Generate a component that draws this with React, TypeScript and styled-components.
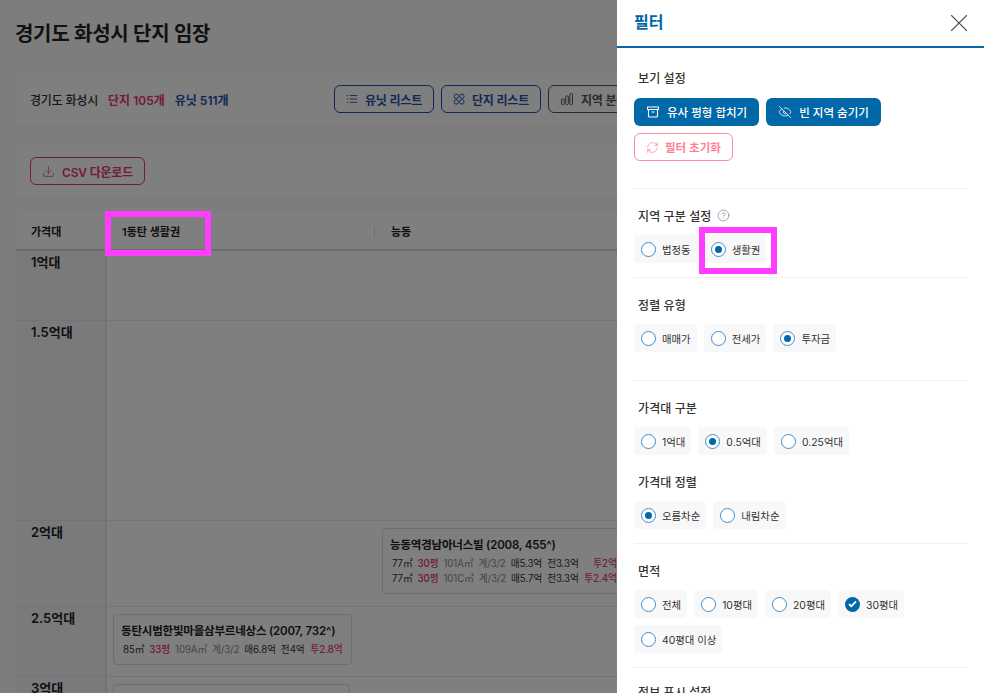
import React from 'react';
import styled, { createGlobalStyle } from 'styled-components';
import { CircleHelp, Download, EyeOff, RefreshCw, X } from 'lucide-react';

const FONT = `Inter, "Noto Sans CJK KR", "Noto Sans", sans-serif`;
const PRIMARY = '#0067a8';
const PINK = '#e8327f';

const GlobalStyle = createGlobalStyle`
  html, body {
    margin: 0;
    height: 100%;
    overflow: hidden;
    background: #fbfbfb;
    font-family: ${FONT};
  }
  * { box-sizing: border-box; }
`;

const ListIcon = () => (
  <svg width="14" height="14" viewBox="0 0 14 14" fill="none" stroke="currentColor" strokeWidth="1.100">
    <path d="M4.500 3h8.500M4.500 7h8.500M4.500 11h8.500M1 3h1.500M1 7h1.500M1 11h1.500" />
  </svg>
);

const CirclesIcon = () => (
  <svg width="14" height="14" viewBox="0 0 14 14" fill="none" stroke="currentColor" strokeWidth="1.100">
    <circle cx="3.800" cy="3.800" r="2.600" />
    <circle cx="10.400" cy="3.800" r="2.600" />
    <circle cx="3.800" cy="10.400" r="2.600" />
    <circle cx="10.400" cy="10.400" r="2.600" />
  </svg>
);

const BarsIcon = () => (
  <svg width="14" height="14" viewBox="0 0 14 14" fill="none" stroke="currentColor" strokeWidth="1">
    <rect x="1.500" y="7" width="2.600" height="5.500" rx="0.800" />
    <rect x="5.700" y="4" width="2.600" height="8.500" rx="0.800" />
    <rect x="9.900" y="1.500" width="2.600" height="11" rx="0.800" />
  </svg>
);

const BoxIcon = () => (
  <svg width="14" height="14" viewBox="0 0 14 14" fill="none" stroke="currentColor" strokeWidth="1.100">
    <path d="M1.500 2h11v2.500h-11zM2.500 4.500v6.500a1 1 0 0 0 1 1h7a1 1 0 0 0 1-1V4.500M5.500 7h3" />
  </svg>
);

const Page = styled.div`
  height: 693px;
  width: 984px;
  padding: 0 15px;
  overflow: hidden;
`;

const Title = styled.h1`
  margin: 0;
  height: 71px;
  display: flex;
  align-items: center;
  padding-bottom: 6px;
  font-size: 20px;
  font-weight: 600;
  letter-spacing: -0.3px;
  color: #222;
`;

const Card = styled.div`
  height: 56px;
  margin-bottom: 16px;
  padding: 0 14px;
  display: flex;
  align-items: center;
  background: #fff;
  border: 1px solid #f4f4f4;
  border-radius: 8px;
`;

const Summary = styled.div`
  display: flex;
  gap: 10px;
  width: 304px;
  font-size: 12px;
  font-weight: 500;
  letter-spacing: -0.2px;
  color: #333;
`;

const Count = styled.span<{ $color: string }>`
  color: ${p => p.$color};
  font-weight: 600;
  letter-spacing: 0;
`;

const Actions = styled.div`
  display: flex;
  gap: 7px;
  flex: none;
`;

const OutlineButton = styled.button<{ $color: string; $width: number }>`
  width: ${p => p.$width}px;
  height: 28px;
  flex: none;
  display: flex;
  align-items: center;
  gap: 7px;
  padding: 0 11px;
  background: #fff;
  border: 1px solid ${p => p.$color};
  border-radius: 6px;
  color: ${p => p.$color};
  font-family: ${FONT};
  font-size: 12px;
  font-weight: 600;
  letter-spacing: -0.2px;
  white-space: nowrap;
`;

const Table = styled.div`
  background: #fff;
  border: 1px solid #f4f4f4;
  border-radius: 8px 8px 0 0;
  margin-top: -4px;
`;

const HeaderRow = styled.div`
  display: grid;
  grid-template-columns: 91px 267px 1fr;
  height: 39px;
  padding-top: 3px;
  align-items: center;
  border-bottom: 2px solid #d4d6d8;
  font-size: 11px;
  font-weight: 600;
  color: #222;
`;

const HeaderCell = styled.div<{ $divider?: boolean }>`
  padding-left: ${p => (p.$divider ? 16 : 15)}px;
  border-left: ${p => (p.$divider ? '1px solid #dddddd' : 'none')};
  height: ${p => (p.$divider ? 12 : 16)}px;
  line-height: ${p => (p.$divider ? 12 : 16)}px;
`;

const PriceRow = styled.div<{ $height: number }>`
  display: grid;
  grid-template-columns: 91px 269px 1fr;
  height: ${p => p.$height}px;
  border-bottom: 1px solid #e8e8e8;
`;

const PriceLabel = styled.div`
  padding: 1px 0 0 15px;
  background: #f0f4f8;
  border-right: 2px solid #e4e6e8;
  font-size: 13px;
  font-weight: 600;
  color: #222;
`;

const Column = styled.div`
  padding: 7px 6px;
  min-width: 0;
`;

const ComplexCard = styled.div<{ $width: number }>`
  width: ${p => p.$width}px;
  padding: 7px 7px 0;
  height: 51px;
  background: #fff;
  border: 1px solid #dcdcdc;
  border-radius: 4px;
`;

const TallCard = styled(ComplexCard)`
  height: 66px;
`;

const ComplexName = styled.div`
  font-size: 11.500px;
  font-weight: 600;
  letter-spacing: -0.2px;
  color: #222;
  white-space: nowrap;
  margin-bottom: 3px;
`;

const UnitLine = styled.div`
  display: flex;
  gap: 5px;
  padding-left: 2px;
  height: 15px;
  align-items: center;
  font-size: 9.700px;
  letter-spacing: -0.1px;
  white-space: nowrap;
  color: #333;
`;

const UnitPart = styled.span<{ $tone?: 'pink' | 'muted' | 'pinkBold' }>`
  color: ${p => (p.$tone === 'muted' ? '#8a8a8a' : p.$tone ? PINK : '#333')};
  font-weight: ${p => (p.$tone === 'pink' || p.$tone === 'pinkBold' ? 500 : 400)};
  min-width: ${p => (p.$tone === 'pinkBold' ? 33 : 0)}px;
  text-align: ${p => (p.$tone === 'pinkBold' ? 'right' : 'left')};
`;

const Dim = styled.div`
  position: fixed;
  inset: 0;
  background: rgba(0, 0, 0, 0.5);
`;

const Drawer = styled.aside`
  position: fixed;
  top: 0;
  right: 0;
  bottom: 0;
  width: 367px;
  background: #fff;
  overflow: hidden;
`;

const DrawerHeader = styled.header`
  height: 48px;
  padding: 0 17px;
  display: flex;
  align-items: center;
  justify-content: space-between;
  border-bottom: 2px solid ${PRIMARY};
`;

const DrawerTitle = styled.h2`
  margin: 0 0 5px;
  font-size: 16px;
  font-weight: 600;
  color: ${PRIMARY};
`;

const CloseButton = styled.button`
  display: flex;
  padding: 0;
  margin-right: -7px;
  background: none;
  border: none;
  color: #555;
`;

const DrawerBody = styled.div`
  padding: 0 16px 0 17px;
`;

const Section = styled.section<{ $height: number; $divider?: boolean }>`
  display: flow-root;
  height: ${p => p.$height}px;
  border-bottom: ${p => (p.$divider ? '1px solid #f1f1f1' : 'none')};
`;

const SectionTitle = styled.div<{ $top?: number; $bottom?: number }>`
  display: flex;
  align-items: center;
  gap: 6px;
  height: 16px;
  margin: ${p => p.$top ?? 18}px 0 ${p => p.$bottom ?? 12}px 4px;
  font-size: 12px;
  font-weight: 500;
  letter-spacing: 0.1px;
  color: #333;
`;

const HelpMark = styled.span`
  display: flex;
  color: #777;
`;

const Wrap = styled.div`
  display: flex;
  flex-wrap: wrap;
  gap: 7px;
`;

const FilledButton = styled.button`
  height: 28px;
  display: flex;
  align-items: center;
  gap: 7px;
  padding: 0 12px;
  background: ${PRIMARY};
  border: none;
  border-radius: 6px;
  color: #fff;
  font-family: ${FONT};
  font-size: 11.500px;
  font-weight: 500;
  white-space: nowrap;
`;

const ResetButton = styled(FilledButton)`
  gap: 6px;
  padding: 0 11px;
  background: #fff;
  border: 1px solid #ff8a9c;
  color: #ff7f93;
  font-weight: 600;
`;

const Chip = styled.label`
  height: 28px;
  display: flex;
  align-items: center;
  gap: 6px;
  padding: 0 6px 0 7px;
  background: #f8f8f8;
  border-radius: 4px;
  font-size: 10.400px;
  color: #333;
  white-space: nowrap;
`;

const RadioMark = styled.span<{ $on: boolean }>`
  position: relative;
  width: 15px;
  height: 15px;
  flex: none;
  background: #fff;
  border: 1px solid #3f8ed0;
  border-radius: 50%;

  &::after {
    content: '';
    display: ${p => (p.$on ? 'block' : 'none')};
    position: absolute;
    inset: 3px;
    background: ${PRIMARY};
    border-radius: 50%;
  }
`;

const CheckMark = styled.span`
  width: 15px;
  height: 15px;
  flex: none;
  display: flex;
  align-items: center;
  justify-content: center;
  background: ${PRIMARY};
  border-radius: 50%;
`;

const Highlight = styled.div<{ $x: number; $y: number; $w: number; $h: number }>`
  position: fixed;
  left: ${p => p.$x}px;
  top: ${p => p.$y}px;
  width: ${p => p.$w}px;
  height: ${p => p.$h}px;
  border: 6px solid #ff3cff;
`;

type Option = { label: string; on?: boolean; check?: boolean };

const Options = ({ items }: { items: Option[] }) => (
  <Wrap>
    {items.map(item => (
      <Chip key={item.label}>
        {item.check ? (
          <CheckMark>
            <svg width="9" height="8" viewBox="0 0 9 8" fill="none" stroke="#fff" strokeWidth="1.800">
              <path d="M1 4l2.300 2.300L8 1.300" />
            </svg>
          </CheckMark>
        ) : (
          <RadioMark $on={!!item.on} />
        )}
        {item.label}
      </Chip>
    ))}
  </Wrap>
);

const Unit = ({ parts }: { parts: string[] }) => (
  <UnitLine>
    <UnitPart>{parts[0]}</UnitPart>
    <UnitPart $tone="pink">{parts[1]}</UnitPart>
    <UnitPart $tone="muted">{parts[2]}</UnitPart>
    <UnitPart $tone="muted">{parts[3]}</UnitPart>
    <UnitPart>{parts[4]}</UnitPart>
    <UnitPart>{parts[5]}</UnitPart>
    <UnitPart $tone="pinkBold">{parts[6]}</UnitPart>
  </UnitLine>
);

export default function App() {
  return (
    <>
      <GlobalStyle />
      <Page>
        <Title>경기도 화성시 단지 임장</Title>
        <Card>
          <Summary>
            <span>경기도 화성시</span>
            <Count $color={PINK}>단지 105개</Count>
            <Count $color="#2450a8">유닛 511개</Count>
          </Summary>
          <Actions>
            <OutlineButton $color="#2450a8" $width={100}><ListIcon />유닛 리스트</OutlineButton>
            <OutlineButton $color="#2450a8" $width={100}><CirclesIcon />단지 리스트</OutlineButton>
            <OutlineButton $color="#555" $width={110}><BarsIcon />지역 분석</OutlineButton>
          </Actions>
        </Card>
        <Card>
          <OutlineButton $color={PINK} $width={115}><Download size={15} strokeWidth={1.300} />CSV 다운로드</OutlineButton>
        </Card>
        <Table>
          <HeaderRow>
            <HeaderCell>가격대</HeaderCell>
            <HeaderCell>1동탄 생활권</HeaderCell>
            <HeaderCell $divider>능동</HeaderCell>
          </HeaderRow>
          <PriceRow $height={70}><PriceLabel>1억대</PriceLabel><Column /><Column /></PriceRow>
          <PriceRow $height={200}><PriceLabel>1.5억대</PriceLabel><Column /><Column /></PriceRow>
          <PriceRow $height={86}>
            <PriceLabel>2억대</PriceLabel>
            <Column />
            <Column>
              <TallCard $width={300}>
                <ComplexName>능동역경남아너스빌 (2008, 455^)</ComplexName>
                <Unit parts={['77㎡', '30평', '101A㎡', '계/3/2', '매5.3억', '전3.3억', '투2억']} />
                <Unit parts={['77㎡', '30평', '101C㎡', '계/3/2', '매5.7억', '전3.3억', '투2.4억']} />
              </TallCard>
            </Column>
          </PriceRow>
          <PriceRow $height={70}>
            <PriceLabel>2.5억대</PriceLabel>
            <Column>
              <ComplexCard $width={239}>
                <ComplexName>동탄시범한빛마을삼부르네상스 (2007, 732^)</ComplexName>
                <Unit parts={['85㎡', '33평', '109A㎡', '계/3/2', '매6.8억', '전4억', '투2.8억']} />
              </ComplexCard>
            </Column>
            <Column />
          </PriceRow>
          <PriceRow $height={70}>
            <PriceLabel>3억대</PriceLabel>
            <Column><ComplexCard $width={237} /></Column>
            <Column />
          </PriceRow>
        </Table>
      </Page>
      <Dim />
      <Drawer>
        <DrawerHeader>
          <DrawerTitle>필터</DrawerTitle>
          <CloseButton><X size={30} strokeWidth={0.900} /></CloseButton>
        </DrawerHeader>
        <DrawerBody>
          <Section $height={141} $divider>
            <SectionTitle $top={21} $bottom={13}>보기 설정</SectionTitle>
            <Wrap>
              <FilledButton><BoxIcon />유사 평형 합치기</FilledButton>
              <FilledButton><EyeOff size={14} strokeWidth={1.300} />빈 지역 숨기기</FilledButton>
              <ResetButton><RefreshCw size={13} strokeWidth={1.300} />필터 초기화</ResetButton>
            </Wrap>
          </Section>
          <Section $height={89} $divider>
            <SectionTitle>
              지역 구분 설정
              <HelpMark><CircleHelp size={13} strokeWidth={1.200} /></HelpMark>
            </SectionTitle>
            <Options items={[{ label: '법정동' }, { label: '생활권', on: true }]} />
          </Section>
          <Section $height={103} $divider>
            <SectionTitle>정렬 유형</SectionTitle>
            <Options items={[{ label: '매매가' }, { label: '전세가' }, { label: '투자금', on: true }]} />
          </Section>
          <Section $height={163} $divider>
            <SectionTitle>가격대 구분</SectionTitle>
            <Options items={[{ label: '1억대' }, { label: '0.5억대', on: true }, { label: '0.25억대' }]} />
            <SectionTitle>가격대 정렬</SectionTitle>
            <Options items={[{ label: '오름차순', on: true }, { label: '내림차순' }]} />
          </Section>
          <Section $height={124} $divider>
            <SectionTitle>면적</SectionTitle>
            <Options
              items={[
                { label: '전체' },
                { label: '10평대' },
                { label: '20평대' },
                { label: '30평대', check: true },
                { label: '40평대 이상' },
              ]}
            />
          </Section>
          <Section $height={60}>
            <SectionTitle $top={15}>정보 표시 설정</SectionTitle>
          </Section>
        </DrawerBody>
      </Drawer>
      <Highlight $x={105} $y={211} $w={106} $h={45} />
      <Highlight $x={699} $y={227} $w={78} $h={47} />
    </>
  );
}
